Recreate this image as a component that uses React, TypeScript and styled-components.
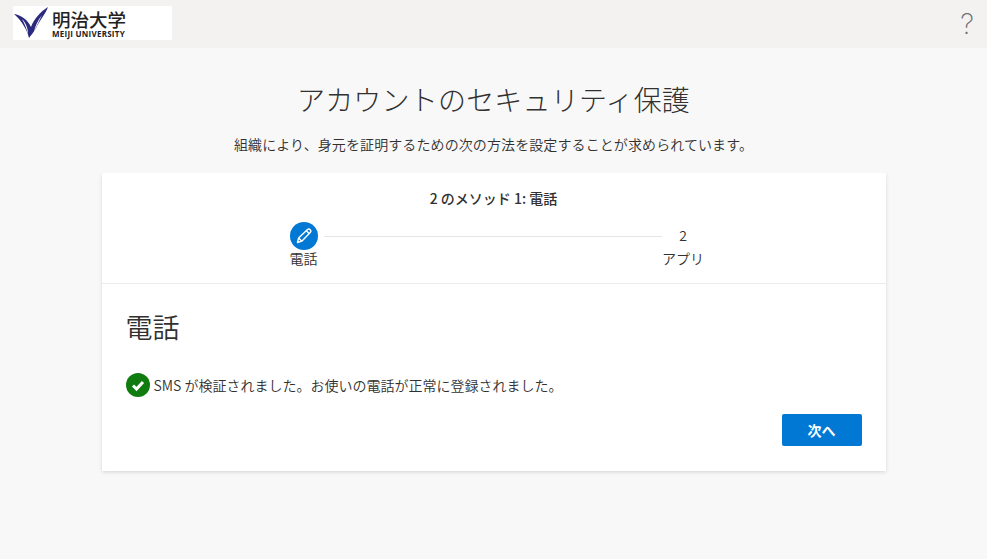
import React from "react";
import styled, { createGlobalStyle } from "styled-components";

const Global = createGlobalStyle`
  html, body { margin: 0; padding: 0; height: 100%; background: #f8f8f8; }
  body { font-family: "Noto Sans CJK JP", "Noto Sans", sans-serif; color: #323130; overflow: hidden; }
`;

const Page = styled.div`
  width: 987px;
  height: 559px;
  display: flex;
  flex-direction: column;
  background: #f8f8f8;
`;
const Header = styled.header`
  height: 48px;
  flex: none;
  background: #f3f2f1;
  display: flex;
  align-items: flex-start;
  justify-content: space-between;
  padding: 6px 0 0 13px;
  box-sizing: border-box;
`;
const Logo = styled.div`
  width: 159px;
  height: 34px;
  background: #fff;
  display: flex;
  align-items: center;
  gap: 4px;
  padding-left: 1px;
  box-sizing: border-box;
`;
const LogoText = styled.div`
  display: flex;
  flex-direction: column;
  align-items: flex-start;
  color: #222;
`;
const LogoJa = styled.span`
  font-size: 18.5px;
  line-height: 22px;
  font-weight: 500;
`;
const LogoEn = styled.span`
  font-family: "Open Sans", sans-serif;
  font-size: 8px;
  line-height: 9px;
  font-weight: 700;
  letter-spacing: 0.25px;
  margin-top: -1px;
`;
const Help = styled.span`
  font-family: "Inter", sans-serif;
  font-weight: 200;
  font-size: 28px;
  line-height: 28px;
  color: #6f6f6f;
  margin: 4px 13px 0 0;
`;
const Main = styled.main`
  display: flex;
  flex-direction: column;
  align-items: center;
`;
const Title = styled.h1`
  margin: 30px 0 0;
  font-size: 28px;
  line-height: 42px;
  font-weight: 300;
  letter-spacing: 0.2px;
  color: #323130;
`;
const Sub = styled.p`
  margin: 14px 0 0;
  font-size: 14px;
  line-height: 20px;
  letter-spacing: 0.1px;
  font-weight: 350;
  color: #323130;
`;
const Card = styled.section`
  margin-top: 19px;
  width: 784px;
  height: 298px;
  background: #fff;
  box-shadow: 0 1.6px 3.6px rgba(0,0,0,.13), 0 0.3px 0.9px rgba(0,0,0,.11);
  display: flex;
  flex-direction: column;
`;
const StepArea = styled.div`
  height: 111px;
  flex: none;
  border-bottom: 1px solid #edebe9;
  display: flex;
  flex-direction: column;
  align-items: center;
  padding-top: 15px;
  box-sizing: border-box;
`;
const StepTitle = styled.div`
  font-size: 14px;
  line-height: 20px;
  font-weight: 500;
  color: #323130;
`;
const Stepper = styled.div`
  margin: 14px 0 0 7px;
  width: 415px;
  display: grid;
  grid-template-columns: 28px 1fr 43px;
`;
const Step = styled.div`
  display: flex;
  flex-direction: column;
  align-items: center;
  font-size: 14px;
  line-height: 16px;
  font-weight: 350;
  white-space: nowrap;
`;
const Circle = styled.div`
  width: 28px;
  height: 28px;
  border-radius: 50%;
  background: #0078d4;
  display: flex;
  align-items: center;
  justify-content: center;
`;
const Num = styled.div`
  height: 28px;
  line-height: 26px;
`;
const Line = styled.div`
  height: 1px;
  background: #e6e6e6;
  margin: 14px 0 0 6px;
`;
const Body = styled.div`
  flex: 1;
  padding: 24px 24px 0;
  display: flex;
  flex-direction: column;
`;
const Heading = styled.h2`
  margin: 0;
  font-size: 27px;
  line-height: 38px;
  font-weight: 350;
  color: #323130;
`;
const Status = styled.div`
  margin-top: 27px;
  display: flex;
  align-items: center;
  gap: 4px;
  font-size: 14px;
  line-height: 24px;
  font-weight: 350;
`;
const Actions = styled.div`
  margin-top: 17px;
  display: flex;
  justify-content: flex-end;
`;
const NextButton = styled.button`
  width: 80px;
  height: 32px;
  border: none;
  border-radius: 2px;
  background: #0078d4;
  color: #fff;
  font-family: inherit;
  font-size: 14px;
  font-weight: 700;
  padding: 0;
`;

export default function App() {
  return (
    <Page>
      <Global />
      <Header>
        <Logo>
          <svg width="34" height="34" viewBox="0 0 34 34">
            <path d="M0 8 C7 9 14 14 17 21 C20 13 26 6 34 1 C31 9 25 15 22 22 C20 26 17 29 15 32 C13 24 8 15 0 8 Z" fill="#2b2a7f" />
            <path d="M8 13 C11 18 13 24 14 29 C14 22 12 17 8 13 Z" fill="#fff" />
            <path d="M20 26 C21 20 24 14 28 9 C25 15 22 21 20 26 Z" fill="#fff" />
          </svg>
          <LogoText>
            <LogoJa>明治大学</LogoJa>
            <LogoEn>MEIJI UNIVERSITY</LogoEn>
          </LogoText>
        </Logo>
        <Help>?</Help>
      </Header>
      <Main>
        <Title>アカウントのセキュリティ保護</Title>
        <Sub>組織により、身元を証明するための次の方法を設定することが求められています。</Sub>
        <Card>
          <StepArea>
            <StepTitle>2 のメソッド 1: 電話</StepTitle>
            <Stepper>
              <Step>
                <Circle>
                  <svg width="16" height="16" viewBox="0 0 16 16" fill="none" stroke="#fff" strokeWidth="1.4" strokeLinejoin="round">
                    <path d="M1.5 14.5 L2.6 10 L11.5 1.6 C12.3 0.9 13.4 0.9 14.2 1.7 C15 2.5 15 3.6 14.2 4.4 L5.8 13.2 Z" />
                    <path d="M2.6 10 L5.8 13.2 M10.4 2.8 L13.1 5.5" />
                  </svg>
                </Circle>
                電話
              </Step>
              <Line />
              <Step>
                <Num>2</Num>
                アプリ
              </Step>
            </Stepper>
          </StepArea>
          <Body>
            <Heading>電話</Heading>
            <Status>
              <svg width="24" height="24" viewBox="0 0 24 24">
                <circle cx="12" cy="12" r="12" fill="#107c10" />
                <path d="M7 12.5 L10.5 16 L17 9" fill="none" stroke="#fff" strokeWidth="3" />
              </svg>
              SMS が検証されました。お使いの電話が正常に登録されました。
            </Status>
            <Actions>
              <NextButton>次へ</NextButton>
            </Actions>
          </Body>
        </Card>
      </Main>
    </Page>
  );
}
